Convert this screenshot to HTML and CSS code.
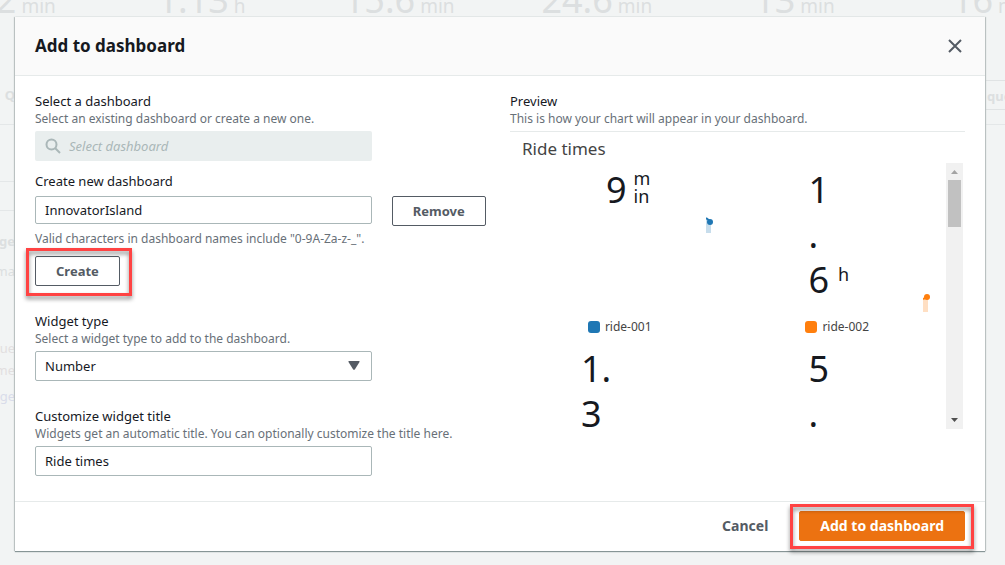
FILE: index.html
```html
<!DOCTYPE html>
<html lang="en">
<head>
<meta charset="utf-8">
<title>Add to dashboard</title>
<link rel="stylesheet" href="styles.css">
</head>
<body>
<div class="backdrop" aria-hidden="true">
  <div class="metrics">
    <div class="metric metric-first">2<small> min</small></div>
    <div class="metric">1.13<small> h</small></div>
    <div class="metric">15.6<small> min</small></div>
    <div class="metric">24.6<small> min</small></div>
    <div class="metric">13<small> min</small></div>
    <div class="metric">16<small> min</small></div>
  </div>
  <div class="edges">
    <div class="edge edge-left">
      <b class="row row-query">Q</b>
      <span class="row row-blank"></span>
      <span class="row row-line"></span>
      <b class="row row-name">ge</b>
      <span class="row row-name">ma</span>
      <span class="row row-item">ue</span>
      <span class="row row-tight">me</span>
      <span class="row row-link">ge</span>
    </div>
    <div class="edge edge-right">
      <b class="tab">que</b>
      <span class="tab-rule"></span>
    </div>
  </div>
</div>

<main class="modal" role="dialog" aria-labelledby="modal-title">
  <header class="modal-header">
    <h1 class="modal-title" id="modal-title">Add to dashboard</h1>
    <button class="close" type="button" aria-label="Close">
      <svg width="14" height="14" viewBox="0 0 14 14"><path d="M1 1l12 12M13 1L1 13" fill="none" stroke="#545b64" stroke-width="2"/></svg>
    </button>
  </header>

  <div class="modal-body">
    <form class="form">
      <div class="field">
        <label class="label" for="dash">Select a dashboard</label>
        <p class="hint">Select an existing dashboard or create a new one.</p>
        <div class="control search">
          <svg class="search-icon" width="16" height="16" viewBox="0 0 16 16"><circle cx="6.5" cy="6.5" r="5" fill="none" stroke="#aab7b8" stroke-width="2"/><path d="M10 10l5 5" stroke="#aab7b8" stroke-width="2"/></svg>
          <input class="search-input" id="dash" type="text" placeholder="Select dashboard" disabled>
        </div>
      </div>

      <div class="field field-new">
        <label class="label" for="new">Create new dashboard</label>
        <div class="name-row">
          <input class="control input input-short" id="new" type="text" value="InnovatorIsland">
          <button class="button" type="button">Remove</button>
        </div>
        <p class="hint">Valid characters in dashboard names include "0-9A-Za-z-_".</p>
        <div class="callout callout-create"><button class="button" type="button">Create</button></div>
      </div>

      <div class="field field-spaced">
        <label class="label" for="type">Widget type</label>
        <p class="hint">Select a widget type to add to the dashboard.</p>
        <div class="control select-wrap">
          <select class="input select" id="type"><option>Number</option></select>
          <svg class="caret" width="12" height="9" viewBox="0 0 12 9"><path d="M1 0h10q1 0 .5 1L7 8.200q-1 1-2 0L.5 1Q0 0 1 0z" fill="#545b64"/></svg>
        </div>
      </div>

      <div class="field field-spaced">
        <label class="label" for="title">Customize widget title</label>
        <p class="hint">Widgets get an automatic title. You can optionally customize the title here.</p>
        <input class="control input" id="title" type="text" value="Ride times">
      </div>
    </form>

    <section class="preview">
      <h2 class="label">Preview</h2>
      <p class="hint">This is how your chart will appear in your dashboard.</p>
      <div class="chart">
        <h3 class="chart-title">Ride times</h3>
        <div class="viewport">
          <div class="numbers">
            <div class="cell">
              <div class="value value-a"><span>9</span><span class="unit">m<br>in</span></div>
              <svg class="spark spark-a" width="8" height="16" viewBox="0 0 8 16"><path d="M0 2l5 3v11H0z" fill="#1f77b4" opacity=".25"/><path d="M0 1l4 3" stroke="#1f77b4" stroke-width="2"/><circle cx="4" cy="5" r="3" fill="#1f77b4"/></svg>
              <div class="legend"><i class="swatch swatch-blue"></i>ride-001</div>
            </div>
            <div class="cell">
              <div class="value value-b"><span>1<br>.<br>6</span><span class="unit unit-last">h</span></div>
              <svg class="spark spark-b" width="8" height="18" viewBox="0 0 8 18"><path d="M0 5l5-2v15H0z" fill="#ff7f0e" opacity=".25"/><path d="M0 5l4-2" stroke="#ff7f0e" stroke-width="2"/><circle cx="4" cy="3" r="3" fill="#ff7f0e"/></svg>
              <div class="legend"><i class="swatch swatch-orange"></i>ride-002</div>
            </div>
            <div class="cell"><div class="value value-c"><span>1.<br>3</span></div></div>
            <div class="cell"><div class="value value-b"><span>5<br>.</span></div></div>
          </div>
          <div class="scrollbar">
            <svg width="7" height="4" viewBox="0 0 7 4"><path d="M0 4l3.500-4L7 4z" fill="#a3a3a3"/></svg>
            <div class="thumb"></div>
            <svg class="down" width="7" height="4" viewBox="0 0 7 4"><path d="M0 0l3.500 4L7 0z" fill="#505050"/></svg>
          </div>
        </div>
      </div>
    </section>
  </div>

  <footer class="modal-footer">
    <button class="button button-link" type="button">Cancel</button>
    <div class="callout callout-add"><button class="button button-primary" type="button">Add to dashboard</button></div>
  </footer>
</main>
</body>
</html>
```
FILE: styles.css
```css
* { box-sizing: border-box; }

body {
  margin: 0;
  min-height: 100vh;
  padding: 17px 20px 14px 15px;
  overflow: hidden;
  background: #f2f4f4;
  color: #16191f;
  font: 13px/20px "Noto Sans", "Open Sans", sans-serif;
}

h1, h2, h3, p { margin: 0; font-weight: 400; }
button, input, select { font: inherit; color: inherit; }

/* Dimmed page behind the dialog */
.backdrop {
  position: absolute;
  inset: 0;
  overflow: hidden;
  color: #dcdfe0;
}
.metrics {
  display: grid;
  grid-template-columns: repeat(6, 1fr);
  height: 80px;
  margin: 0 -86px 0 -95px;
  text-align: center;
  white-space: nowrap;
}
.metric { font-size: 36px; line-height: 0; }
.metric small { font-size: 19px; }
.metric-first { padding-left: 44px; }
.edges { display: flex; justify-content: space-between; }
.edge { display: flex; flex-direction: column; width: 20px; overflow: hidden; }
.edge-left { width: 15px; align-items: stretch; }
.row { display: block; height: 30px; line-height: 30px; direction: rtl; }
.row-query { height: 45px; border-bottom: 1px solid #e4e7e8; }
.row-blank { height: 57px; border-bottom: 1px solid #e4e7e8; }
.row-line { height: 29px; border-bottom: 1px solid #e4e7e8; }
.row-name { margin-top: 15px; }
.row-name + .row-name { margin-top: 0; }
.row-item { height: 22px; line-height: 22px; margin-top: 51px; color: #e2dfe0; }
.row-tight { height: 22px; line-height: 22px; color: #e2dfe0; }
.row-link { line-height: 30px; color: #d9dcea; }
.tab { height: 30px; padding-left: 2px; line-height: 30px; border: solid #e0e3e4; border-width: 1px 0; }
.tab-rule { height: 15px; border-bottom: 1px solid #e4e7e8; }

/* Dialog */
.modal {
  position: relative;
  background: #fff;
  box-shadow: 0 1px 1px #879596, 1px 0 1px #c4caca, -1px 0 1px #c4caca;
}
.modal-header {
  display: flex;
  align-items: center;
  justify-content: space-between;
  height: 59px;
  padding: 0 20px;
  background: #fafafa;
  border-bottom: 1px solid #e6eaea;
}
.modal-title { font-size: 17px; font-weight: 700; line-height: 24px; }
.close { display: flex; padding: 3px; border: 0; background: none; }
.modal-body {
  display: grid;
  grid-template-columns: 1fr 1fr;
  gap: 20px;
  padding: 15px 20px 25px;
}

/* Form */
.label { display: block; font-size: 13px; line-height: 20px; }
.hint { color: #687078; font-size: 12px; line-height: 16px; white-space: nowrap; }
.control { display: flex; width: 74%; height: 30px; margin-top: 4px; }
.input { padding: 0 9px; border: 1px solid #aab7b8; border-radius: 2px; background: #fff; }
.search { align-items: center; gap: 8px; padding: 0 10px; border-radius: 2px; background: #e9eeee; }
.search-input { flex: 1; min-width: 0; padding: 0; border: 0; background: none; font-style: italic; }
.search-input::placeholder { color: #aab7b8; opacity: 1; }
.field-new { margin-top: 10px; }
.name-row { display: flex; align-items: flex-start; gap: 20px; margin: 5px 0; }
.input-short { height: 28px; margin: 0; }
.field-spaced { margin-top: 25px; }
.select-wrap { position: relative; }
.select { width: 100%; appearance: none; }
.caret { position: absolute; right: 12px; top: 10px; }

.button {
  height: 30px;
  padding: 0 20px;
  border: 1px solid #545b64;
  border-radius: 2px;
  background: #fff;
  color: #545b64;
  font-weight: 700;
  white-space: nowrap;
}
.modal-footer .button { font-size: 14px; }
.button-link { border-color: transparent; }
.modal .button-primary { border-color: #ec7211; background: #ec7211; color: #fff; }

.callout { position: relative; width: max-content; }
.callout::after {
  content: "";
  position: absolute;
  inset: -8px -12px -10px -9px;
  border: 3px solid #ff4343;
  filter: drop-shadow(0 3px 2px rgba(0, 0, 0, .45));
  pointer-events: none;
}
.callout-create { margin-top: 9px; }
.callout-add::after { inset: -7px -9px -8px -9px; }

/* Preview */
.chart { margin-top: 4px; border-top: 1px solid #e6eaea; }
.chart-title { padding: 5px 12px 3px; color: #444; font-size: 17px; line-height: 23px; }
.viewport { display: flex; height: 266px; margin-right: 2px; overflow: hidden; }
.numbers {
  flex: 1;
  display: grid;
  grid-template-columns: 1fr 1fr;
  grid-template-rows: 179px 95px;
  padding-left: 1px;
}
.cell { position: relative; display: flex; flex-direction: column; }
.value { display: flex; align-items: flex-start; gap: 7px; padding-top: 4px; font-size: 36px; line-height: 45px; }
.value-a { padding-left: 95px; }
.value-b { padding-left: 80px; }
.value-c { padding-left: 70px; }
.unit { padding-top: 2px; font-size: 18px; line-height: 18px; }
.unit-last { align-self: flex-end; padding: 0 0 19px 2px; }
.spark { position: absolute; right: 15px; }
.spark-a { top: 54px; }
.spark-b { top: 131px; }
.legend { display: flex; align-items: center; justify-content: center; gap: 5px; margin-top: auto; padding-bottom: 5px; color: #444; font-size: 12px; }
.swatch { width: 12px; height: 12px; border-radius: 3px; }
.swatch-blue { background: #1f77b4; }
.swatch-orange { background: #ff7f0e; }
.scrollbar { display: flex; flex-direction: column; align-items: center; width: 17px; padding: 7px 0; background: #f1f1f1; }
.thumb { width: 13px; height: 47px; margin-top: 6px; background: #c1c1c1; }
.down { margin-top: auto; }

.modal-footer {
  display: flex;
  justify-content: flex-end;
  gap: 10px;
  padding: 9px 20px 10px;
  border-top: 1px solid #e6eaea;
}
```
